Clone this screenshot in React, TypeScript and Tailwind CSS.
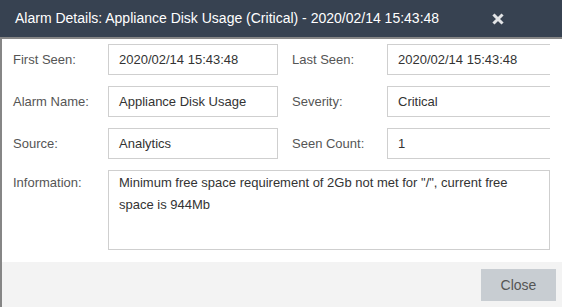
import React from "react";

function Field({ value, className = "" }: { value: string; className?: string }) {
  return (
    <div
      className={`h-[31px] border border-[#cfcfcf] bg-white flex items-center pl-[10px] text-[13px] text-[#333] whitespace-nowrap overflow-hidden ${className}`}
    >
      {value}
    </div>
  );
}

function Label({ children }: { children: React.ReactNode }) {
  return <div className="w-[95px] shrink-0 text-[13px] text-[#555]">{children}</div>;
}

export default function App() {
  return (
    <div className="w-[562px] h-[307px] overflow-hidden bg-white font-['Liberation_Sans',Arial,sans-serif] flex flex-col">
      <div className="h-[37px] shrink-0 bg-[#374251] flex items-center justify-between pl-[15px] pr-[58px]">
        <div className="text-white text-[14px] whitespace-nowrap">
          Alarm Details: Appliance Disk Usage (Critical) - 2020/02/14 15:43:48
        </div>
        <svg width="12" height="12" viewBox="0 0 12 12" className="mt-[1px]">
          <path d="M2.5 2.5 L9.5 9.5 M9.5 2.5 L2.5 9.5" stroke="#e2e4e6" strokeWidth="3" strokeLinecap="square" />
        </svg>
      </div>
      <div className="flex-1 flex flex-col border-l-2 border-t-2 border-[#868686]">
        <div className="pl-[11px] pt-[5px] flex flex-col gap-[11px]">
          <div className="flex items-center">
            <Label>First Seen:</Label>
            <Field value="2020/02/14 15:43:48" className="w-[170px]" />
            <div className="ml-[14px]" />
            <Label>Last Seen:</Label>
            <Field value="2020/02/14 15:43:48" className="w-[163px] border-r-0" />
          </div>
          <div className="flex items-center">
            <Label>Alarm Name:</Label>
            <Field value="Appliance Disk Usage" className="w-[170px]" />
            <div className="ml-[14px]" />
            <Label>Severity:</Label>
            <Field value="Critical" className="w-[163px] border-r-0" />
          </div>
          <div className="flex items-center">
            <Label>Source:</Label>
            <Field value="Analytics" className="w-[170px]" />
            <div className="ml-[14px]" />
            <Label>Seen Count:</Label>
            <Field value="1" className="w-[163px] border-r-0" />
          </div>
          <div className="flex items-start">
            <div className="w-[95px] shrink-0 text-[13px] text-[#555] pt-[2px] leading-[22px]">Information:</div>
            <div className="w-[442px] h-[80px] border border-[#cfcfcf] pl-[10px] pr-[8px] pt-[1px] text-[13px] leading-[22px] text-[#333]">
              Minimum free space requirement of 2Gb not met for "/", current free
              <br />
              space is 944Mb
            </div>
          </div>
        </div>
        <div className="mt-[12px] flex-1 bg-[#f3f3f3] flex justify-end items-start pt-[7px] pr-[6px]">
          <button className="w-[75px] h-[32px] bg-[#c8cdd2] text-[#555] text-[14px] flex items-center justify-center">
            Close
          </button>
        </div>
      </div>
    </div>
  );
}
